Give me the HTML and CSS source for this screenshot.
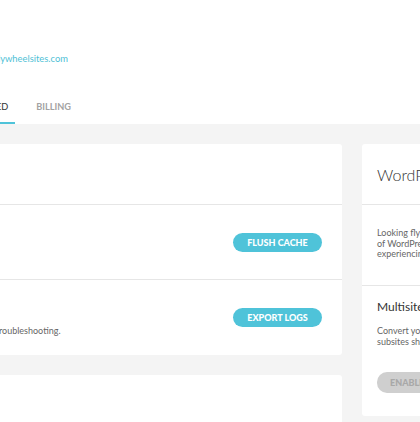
FILE: index.html
```html
<!DOCTYPE html>
<html lang="en">
<head>
<meta charset="utf-8">
<title>Advanced</title>
<link rel="stylesheet" href="styles.css">
</head>
<body>
<header class="site-header">
  <div class="domain-wrap">
    <a class="domain" href="#">mysite.flywheelsites.com</a>
  </div>
  <nav class="tabs">
    <a class="tab" href="#">Overview</a>
    <a class="tab" href="#">Advanced</a>
    <a class="tab active" href="#">Advanced</a>
    <a class="tab" href="#">Billing</a>
  </nav>
</header>
<main class="main">
  <div class="col-left">
    <section class="card">
      <div class="card-head"><h2 class="card-title">Tools</h2></div>
      <div class="row">
        <div class="row-text">
          <h3 class="row-title">Cache</h3>
          <p class="row-desc">Clear the site cache.</p>
        </div>
        <button class="btn">Flush cache</button>
      </div>
      <div class="row">
        <div class="row-text">
          <h3 class="row-title">Logs</h3>
          <p class="row-desc">Download access and error logs for troubleshooting.</p>
        </div>
        <button class="btn">Export logs</button>
      </div>
    </section>
    <section class="card card-next"></section>
  </div>
  <aside class="card card-right">
    <div class="card-head"><h2 class="card-title big">WordPress</h2></div>
    <div class="side-body">
      <p class="side-desc">Looking fly as ever. You're running the latest version<br>of WordPress. If you happen to be<br>experiencing any trouble, let us know.</p>
    </div>
    <div class="side-section">
      <h3 class="side-title">Multisite</h3>
      <p class="side-desc">Convert your site to a network so that<br>subsites share one installation.</p>
      <button class="btn btn-disabled">Enable multisite</button>
    </div>
  </aside>
</main>
</body>
</html>
```
FILE: styles.css
```css
* { box-sizing: border-box; }
html, body { margin: 0; padding: 0; }
body {
  width: 420px;
  height: 422px;
  overflow: hidden;
  background: #f4f4f4;
  font-family: Lato, "Open Sans", sans-serif;
  color: #333;
}
.site-header {
  background: #fff;
  height: 124px;
  padding-top: 52px;
  display: flex;
  flex-direction: column;
}
.domain-wrap {
  width: 68px;
  display: flex;
  justify-content: flex-end;
  height: 13px;
}
.domain {
  white-space: nowrap;
  color: #4fbfd6;
  font-size: 9.4px;
  line-height: 13px;
  text-decoration: none;
}
.tabs {
  margin-top: 35px;
  width: 78px;
  display: flex;
  justify-content: flex-end;
  gap: 14px;
  height: 24px;
}
.tab {
  flex: none;
  white-space: nowrap;
  padding: 0 7px;
  font-size: 9.2px;
  line-height: 13px;
  font-weight: 700;
  text-transform: uppercase;
  color: #a3a3a3;
  text-decoration: none;
  border-bottom: 2px solid transparent;
}
.tab.active {
  color: #333;
  border-bottom-color: #4fc3d9;
  font-weight: 400;
}
.main {
  display: flex;
  gap: 20px;
  padding-top: 20px;
  margin-left: -165px;
  align-items: flex-start;
}
.col-left {
  width: 507px;
  flex: none;
  display: flex;
  flex-direction: column;
  gap: 20px;
}
.card {
  background: #fff;
  border-radius: 3px;
}
.card-head {
  height: 61px;
  border-bottom: 1px solid #e6e6e6;
  display: flex;
  align-items: center;
  padding: 0 15px;
}
.card-title {
  margin: 0;
  font-size: 16px;
  font-weight: 300;
  color: #333;
}
.row {
  height: 75px;
  display: flex;
  align-items: center;
  justify-content: space-between;
  padding: 0 20px;
  border-bottom: 1px solid #e6e6e6;
}
.row:last-child { border-bottom: none; height: 75px; }
.row-title {
  margin: 0 0 10px;
  font-size: 12px;
  font-weight: 400;
}
.row-desc {
  margin: 0;
  font-size: 9px;
  color: #666;
}
.btn {
  flex: none;
  border: none;
  border-radius: 10px;
  height: 19px;
  width: 89px;
  background: #4fc3d9;
  color: #fff;
  font-family: inherit;
  font-weight: 900;
  font-size: 9px;
  text-transform: uppercase;
  padding: 0;
}
.card-next { height: 60px; }
.card-right {
  width: 280px;
  flex: none;
}
.big { font-size: 16px; }
.side-body {
  padding: 23px 15px 20px;
  border-bottom: 1px solid #e6e6e6;
  height: 81px;
}
.side-desc {
  margin: 0;
  font-size: 9px;
  line-height: 10.5px;
  color: #666;
  white-space: nowrap;
}
.side-section {
  padding: 13px 15px 23px;
}
.side-title {
  margin: 0 0 12px;
  font-size: 12px;
  font-weight: 400;
  color: #333;
}
.btn-disabled {
  margin-top: 25px;
  width: 120px;
  height: 21px;
  text-align: left;
  padding-left: 13px;
  background: #cfcfcf;
  color: #a8a8a8;
  font-size: 9px;
}
```
